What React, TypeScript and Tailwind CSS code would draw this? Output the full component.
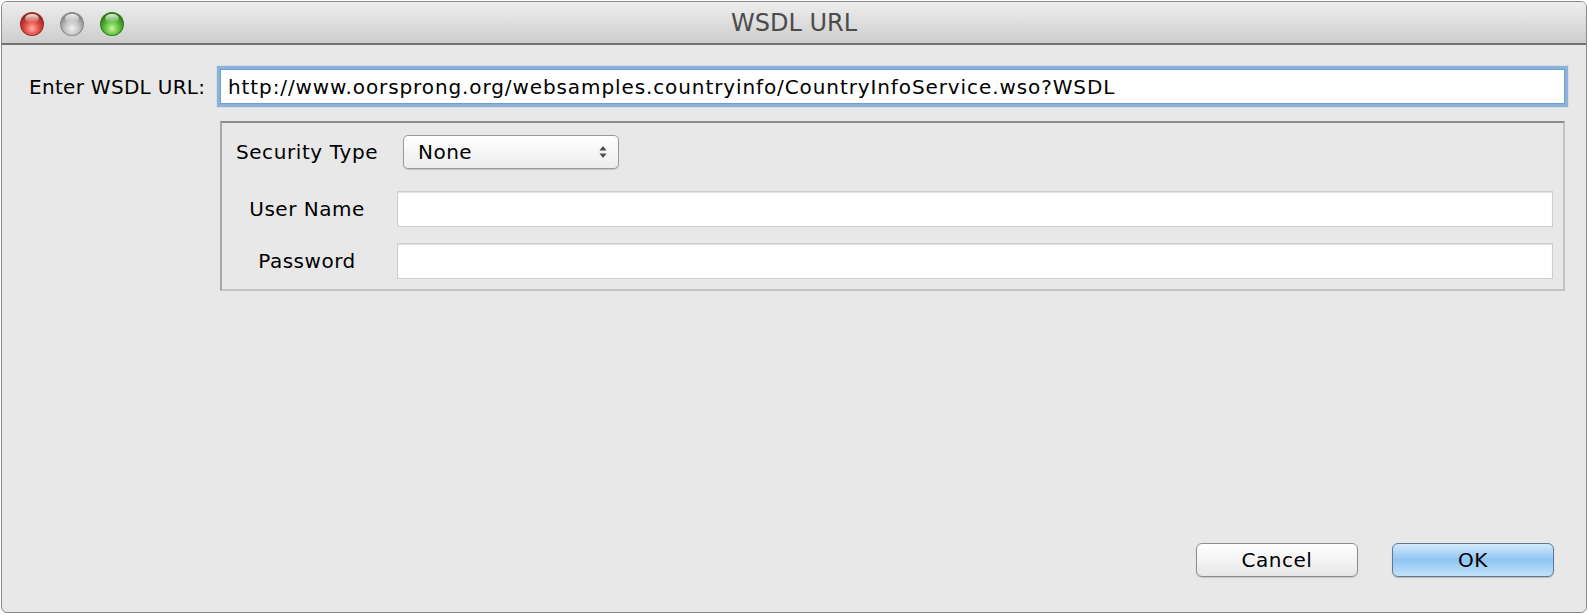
import React from "react";

const font = "font-['DejaVu_Sans',sans-serif]";

function TrafficLight({ id, base, dark, light }: { id: string; base: string; dark: string; light: string }) {
  return (
    <svg width="26" height="26" viewBox="0 0 26 26">
      <defs>
        <radialGradient id={`${id}-body`} cx="50%" cy="70%" r="60%">
          <stop offset="0%" stopColor={light} />
          <stop offset="55%" stopColor={base} />
          <stop offset="100%" stopColor={dark} />
        </radialGradient>
        <linearGradient id={`${id}-shine`} x1="0" y1="0" x2="0" y2="1">
          <stop offset="0%" stopColor="#fff" stopOpacity="0.9" />
          <stop offset="100%" stopColor="#fff" stopOpacity="0" />
        </linearGradient>
      </defs>
      <circle cx="13" cy="13" r="12" fill={dark} />
      <circle cx="13" cy="13" r="11" fill={`url(#${id}-body)`} />
      <ellipse cx="13" cy="7.5" rx="7" ry="4.5" fill={`url(#${id}-shine)`} />
    </svg>
  );
}

function StepperArrows() {
  return (
    <svg width="10" height="14" viewBox="0 0 10 14" className="text-[#4a4a4a]">
      <path d="M5 1 L8.5 5.5 L1.5 5.5 Z" fill="currentColor" />
      <path d="M5 13 L8.5 8.5 L1.5 8.5 Z" fill="currentColor" />
    </svg>
  );
}

function TextField() {
  return (
    <div className="h-[36px] flex-1 border border-[#cdcdcd] bg-white shadow-[inset_0_1px_1px_rgba(0,0,0,0.12)]" />
  );
}

export default function App() {
  return (
    <div className={`h-[614px] w-[1588px] bg-white pl-[1px] pt-[1px] ${font}`}>
      <div className="flex h-[612px] w-[1586px] flex-col overflow-hidden rounded-[6px] border border-[#8a8a8a] bg-[#e8e8e8]">
        {/* Title bar */}
        <div className="relative flex h-[43px] shrink-0 items-center border-b-2 border-[#737373] bg-gradient-to-b from-[#eeeeee] to-[#cdcdcd]">
          <div className="flex items-center gap-[14px] pl-[17px] pt-[2px]">
            <TrafficLight id="r" base="#e44a45" dark="#9b2a26" light="#ffb0a8" />
            <TrafficLight id="g" base="#c4c4c4" dark="#8a8a8a" light="#f2f2f2" />
            <TrafficLight id="gr" base="#5fbf3a" dark="#2f7d1c" light="#c8f5a6" />
          </div>
          <div className="absolute inset-0 flex items-center justify-center text-[24px] text-[#4b4b4b]">
            WSDL URL
          </div>
        </div>

        {/* Body */}
        <div className="flex flex-1 flex-col pl-[27px] pr-[21px] pt-[24px]">
          <div className="flex items-center">
            <div className="w-[191px] text-[20px] tracking-[0.3px] text-black">Enter WSDL URL:</div>
            <div className="flex h-[35px] flex-1 items-center border border-[#6d9fd6] bg-white pl-[7px] text-[20px] tracking-[0.9px] text-black shadow-[0_0_1px_3px_rgba(104,154,212,0.7)]">
              http://www.oorsprong.org/websamples.countryinfo/CountryInfoService.wso?WSDL
            </div>
          </div>

          <div className="ml-[191px] mt-[17px] flex flex-col gap-[16px] border-2 border-[#c3c3c3] border-t-[#8d8d8d] border-l-[#a9a9a9] pb-[10px] pr-[10px] pt-[12px]">
            <div className="mb-[6px] flex items-center">
              <div className="w-[170px] text-center text-[20px] tracking-[0.6px] text-black">Security Type</div>
              <div className="ml-[11px] flex h-[34px] w-[216px] items-center justify-between rounded-[5px] border border-[#9b9b9b] bg-gradient-to-b from-white to-[#ededed] pl-[14px] pr-[10px] text-[20px] tracking-[0.5px] text-black shadow-[0_1px_1px_rgba(0,0,0,0.15)]">
                <span>None</span>
                <StepperArrows />
              </div>
            </div>
            <div className="flex items-center">
              <div className="w-[170px] text-center text-[20px] tracking-[0.5px] text-black">User Name</div>
              <div className="ml-[5px] flex flex-1">
                <TextField />
              </div>
            </div>
            <div className="flex items-center">
              <div className="w-[170px] text-center text-[20px] tracking-[0.5px] text-black">Password</div>
              <div className="ml-[5px] flex flex-1">
                <TextField />
              </div>
            </div>
          </div>

          <div className="flex-1" />

          <div className="mb-[35px] flex justify-end gap-[34px] pr-[11px]">
            <button
              type="button"
              className="h-[34px] w-[162px] rounded-[6px] border border-[#8c8c8c] bg-gradient-to-b from-white via-[#f4f4f4] to-[#e6e6e6] text-[20px] tracking-[0.5px] text-black shadow-[0_1px_1px_rgba(0,0,0,0.15)]"
            >
              Cancel
            </button>
            <button
              type="button"
              className="h-[34px] w-[162px] rounded-[6px] border border-[#5f7892] bg-gradient-to-b from-[#d4e9fb] via-[#8fc5f4] to-[#c4e2fa] text-[20px] tracking-[0.5px] text-black shadow-[0_1px_1px_rgba(0,0,0,0.2)]"
            >
              OK
            </button>
          </div>
        </div>
      </div>
    </div>
  );
}
